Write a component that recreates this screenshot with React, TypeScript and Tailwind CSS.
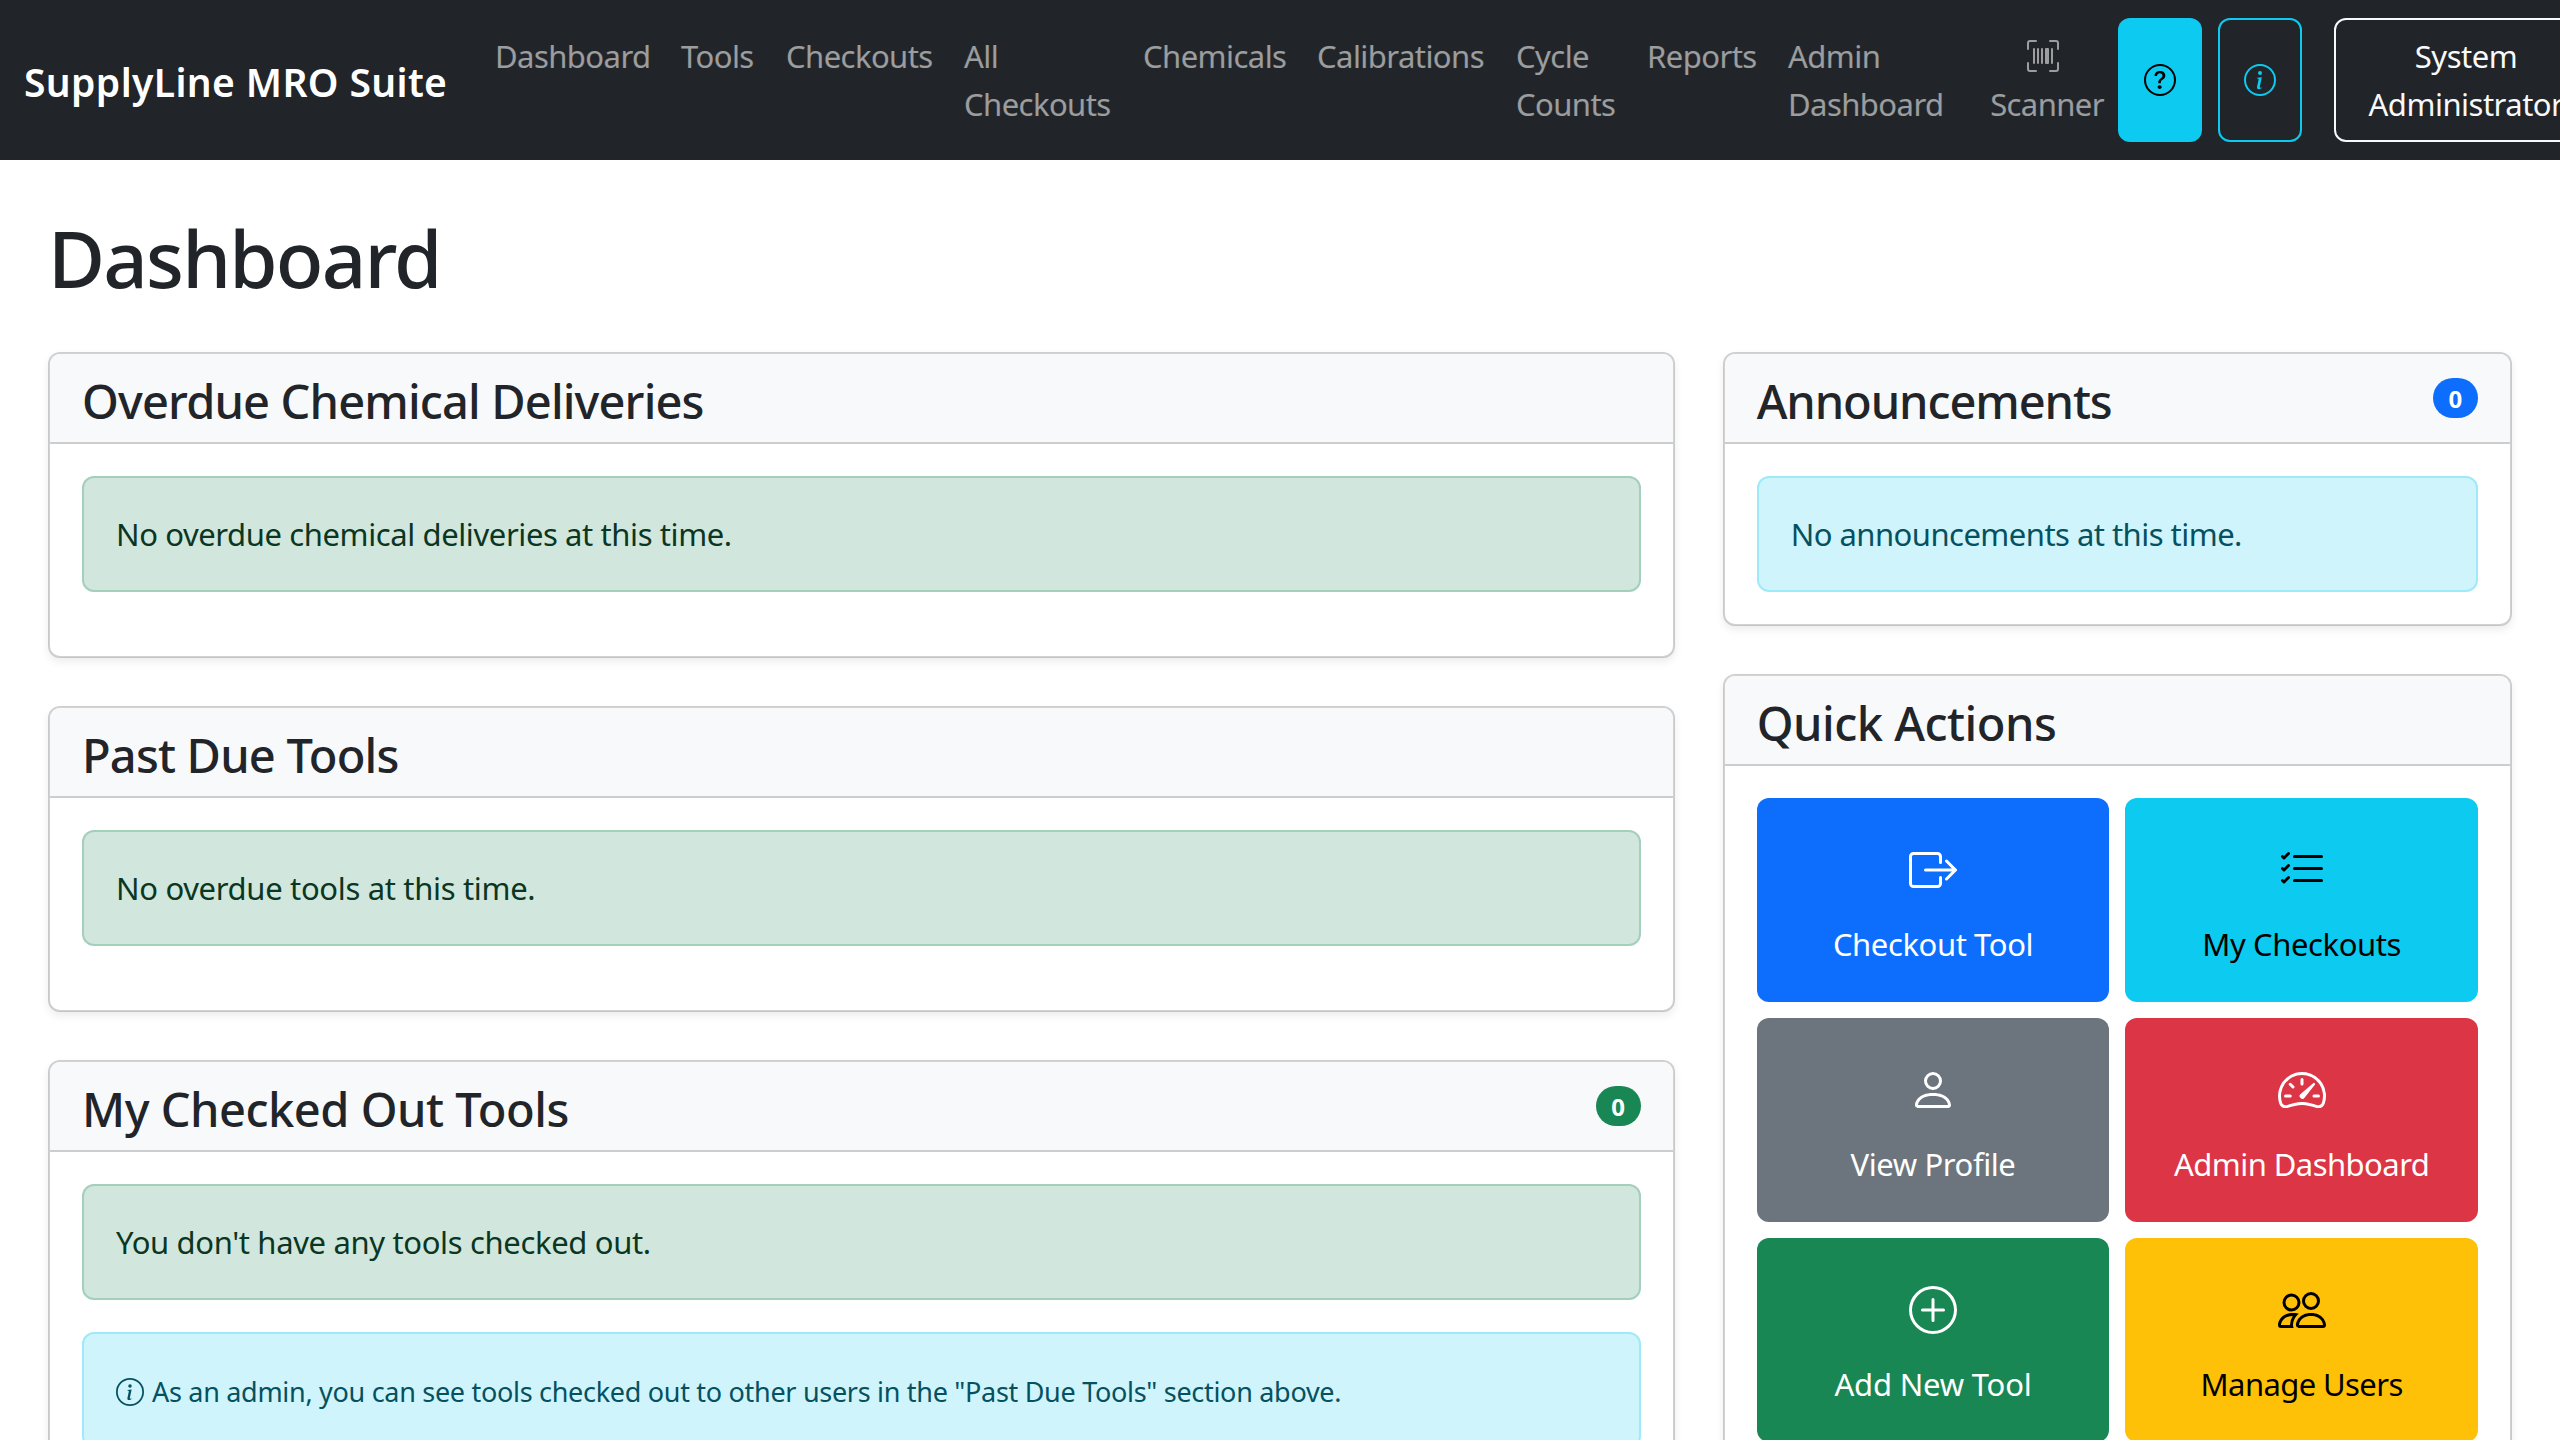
import React from "react";
import {
  BsBoxArrowRight,
  BsInfoCircle,
  BsListCheck,
  BsPeople,
  BsPerson,
  BsPlusCircle,
  BsQuestionCircle,
  BsSpeedometer2,
  BsUpcScan,
} from "react-icons/bs";

const navItems = [
  { lines: ["Dashboard"], className: "w-[186px]" },
  { lines: ["Tools"], className: "w-[105px]" },
  { lines: ["Checkouts"], className: "w-[178px]" },
  { lines: ["All", "Checkouts"], className: "w-[179px]" },
  { lines: ["Chemicals"], className: "w-[174px]" },
  { lines: ["Calibrations"], className: "w-[199px]" },
  { lines: ["Cycle", "Counts"], className: "w-[131px]" },
  { lines: ["Reports"], className: "w-[141px]" },
  { lines: ["Admin", "Dashboard"], className: "w-[185px]" },
];

function Navbar() {
  return (
    <nav className="flex h-40 w-full items-center overflow-hidden bg-[#212529] pl-6 whitespace-nowrap">
      <div className="w-[455px] shrink-0 pt-[3px] text-[39px] leading-[60px] font-semibold tracking-[0.37px] text-white">
        SupplyLine MRO Suite
      </div>
      <div className="flex h-full shrink-0 pt-8 tracking-[-0.55px] text-white/55">
        {navItems.map((item) => (
          <a key={item.lines.join(" ")} className={`shrink-0 pl-4 ${item.className}`}>
            {item.lines.map((line) => (
              <span key={line} className="block">
                {line}
              </span>
            ))}
          </a>
        ))}
      </div>
      <div className="flex h-full w-[157px] shrink-0 flex-col items-center pt-8 pl-[23px] tracking-[-0.6px] text-white/55">
        <span className="mr-[9px] flex h-12 items-start pt-2">
          <BsUpcScan className="size-8" />
        </span>
        <span>Scanner</span>
      </div>
      <button className="ml-1 flex h-[124px] w-[84px] shrink-0 items-center justify-center rounded-xl bg-[#0dcaf0] text-black">
        <BsQuestionCircle className="size-8" />
      </button>
      <button className="ml-4 flex h-[124px] w-[84px] shrink-0 items-center justify-center rounded-xl border-2 border-[#0dcaf0] text-[#0dcaf0]">
        <BsInfoCircle className="size-8" />
      </button>
      <button className="ml-8 h-[124px] w-[264px] shrink-0 rounded-xl border-2 border-[#f8f9fa] text-center tracking-[-0.5px] text-[#f8f9fa]">
        System
        <br />
        Administrator
      </button>
    </nav>
  );
}

function Card({
  title,
  titleClass,
  badge,
  badgeClass = "",
  bodyClass = "",
  children,
}: {
  title: string;
  titleClass: string;
  badge?: string;
  badgeClass?: string;
  bodyClass?: string;
  children: React.ReactNode;
}) {
  return (
    <section className="rounded-xl border-2 border-black/[0.175] bg-white bg-clip-padding shadow-[0_4px_8px_rgba(0,0,0,0.075)]">
      <header className="flex h-[90px] items-start justify-between rounded-t-[10px] border-b-2 border-black/[0.175] bg-[#f8f9fa] px-8">
        <h4 className={`pt-[19px] text-[47px] leading-[56px] font-medium ${titleClass}`}>{title}</h4>
        {badge !== undefined && (
          <span
            className={`mt-6 h-10 w-[45px] rounded-full pt-[9px] text-center text-[24px] leading-6 font-bold tracking-normal text-white ${badgeClass}`}
          >
            {badge}
          </span>
        )}
      </header>
      <div className={`px-8 pt-8 ${bodyClass}`}>{children}</div>
    </section>
  );
}

function Alert({ tone, children }: { tone: "success" | "info"; children: React.ReactNode }) {
  const colors =
    tone === "success"
      ? "border-[#a3cfbb] bg-[#d1e7dd] text-[#0a3622]"
      : "border-[#9eeaf9] bg-[#cff4fc] text-[#055160]";
  return <div className={`h-[116px] rounded-xl border-2 p-8 ${colors}`}>{children}</div>;
}

const actions = [
  { label: "Checkout Tool", Icon: BsBoxArrowRight, className: "bg-[#0d6efd] text-white" },
  { label: "My Checkouts", Icon: BsListCheck, className: "bg-[#0dcaf0] text-black" },
  { label: "View Profile", Icon: BsPerson, className: "bg-[#6c757d] text-white" },
  { label: "Admin Dashboard", Icon: BsSpeedometer2, className: "bg-[#dc3545] text-white tracking-[-0.55px]" },
  { label: "Add New Tool", Icon: BsPlusCircle, className: "bg-[#198754] text-white tracking-[-0.2px]" },
  { label: "Manage Users", Icon: BsPeople, className: "bg-[#ffc107] text-black tracking-[-0.6px]" },
];

export default function App() {
  return (
    <div className="h-[1440px] w-full overflow-hidden bg-white font-['Noto_Sans',sans-serif] text-[31px] leading-[48px] tracking-[-0.4px] text-[#212529]">
      <Navbar />
      <main className="px-12 pt-[50px]">
        <h1 className="h-[142px] text-[78px] leading-[96px] font-medium tracking-[-1.8px]">Dashboard</h1>
        <div className="grid grid-cols-[1626.67px_789.33px] items-start gap-12">
          <div className="flex flex-col gap-12">
            <Card title="Overdue Chemical Deliveries" titleClass="tracking-[-0.85px]" bodyClass="pb-16">
              <Alert tone="success">No overdue chemical deliveries at this time.</Alert>
            </Card>
            <Card title="Past Due Tools" titleClass="tracking-[-0.8px]" bodyClass="pb-16">
              <Alert tone="success">
                <span className="tracking-[-0.33px]">No overdue tools at this time.</span>
              </Alert>
            </Card>
            <Card
              title="My Checked Out Tools"
              titleClass="tracking-[-0.5px]"
              badge="0"
              badgeClass="bg-[#198754]"
              bodyClass="flex flex-col gap-8 pb-8"
            >
              <Alert tone="success">
                <span className="tracking-[-0.35px]">You don't have any tools checked out.</span>
              </Alert>
              <Alert tone="info">
                <div className="flex text-[27px] tracking-[-0.3px]">
                  <BsInfoCircle className="mt-3 mr-2 size-7" />
                  <span className="pt-0.5">
                    As an admin, you can see tools checked out to other users in the "Past Due Tools" section above.
                  </span>
                </div>
              </Alert>
            </Card>
          </div>
          <div className="flex flex-col gap-12">
            <Card
              title="Announcements"
              titleClass="tracking-[-1.1px]"
              badge="0"
              badgeClass="bg-[#0d6efd]"
              bodyClass="pb-8"
            >
              <Alert tone="info">
                <span className="tracking-[-0.53px]">No announcements at this time.</span>
              </Alert>
            </Card>
            <Card title="Quick Actions" titleClass="tracking-[-0.5px]" bodyClass="pb-8">
              <div className="grid grid-cols-2 gap-4">
                {actions.map(({ label, Icon, className }) => (
                  <button
                    key={label}
                    className={`flex h-[204px] flex-col items-center rounded-xl pt-12 ${className}`}
                  >
                    <Icon className="size-12" />
                    <span className="mt-[26px]">{label}</span>
                  </button>
                ))}
              </div>
            </Card>
          </div>
        </div>
      </main>
    </div>
  );
}
